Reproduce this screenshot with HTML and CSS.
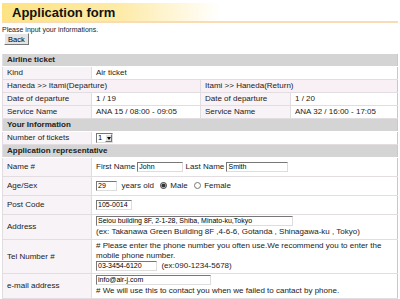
FILE: index.html
```html
<!DOCTYPE html>
<html>
<head>
  <link rel="stylesheet" href="styles.css">
</head>
<body>
  <!-- Title bar -->
  <div class="title-bar">
    <h1>Application form</h1>
  </div>
  <p class="intro">Please input your informations.</p>
  <button class="back-btn">Back</button>

  <table class="form-table">
    <colgroup>
      <col class="c-label"><col class="c-value"><col class="c-label2"><col>
    </colgroup>
    <tr><th colspan="4" class="section">Airline ticket</th></tr>
    <tr><td class="label">Kind</td><td colspan="3">Air ticket</td></tr>
    <tr class="route"><td colspan="2">Haneda &gt;&gt; Itami(Departure)</td><td colspan="2">Itami &gt;&gt; Haneda(Return)</td></tr>
    <tr><td class="label">Date of departure</td><td>1 / 19</td><td class="label">Date of departure</td><td>1 / 20</td></tr>
    <tr><td class="label">Service Name</td><td>ANA 15 / 08:00 - 09:05</td><td class="label">Service Name</td><td>ANA 32 / 16:00 - 17:05</td></tr>

    <tr><th colspan="4" class="section">Your Information</th></tr>
    <tr>
      <td class="label">Number of tickets</td>
      <td colspan="3"><span class="select-wrap"><select class="qty"><option>1</option></select></span></td>
    </tr>

    <tr><th colspan="4" class="section">Application representative</th></tr>
    <tr class="tall">
      <td class="label">Name #</td>
      <td colspan="3">First Name <input class="name" value="John"> Last Name <input class="name wide" value="Smith"></td>
    </tr>
    <tr class="tall">
      <td class="label">Age/Sex</td>
      <td colspan="3"><input class="age" value="29"> &nbsp;years old <label><input type="radio" name="sex" checked> Male</label> <label><input type="radio" name="sex"> Female</label></td>
    </tr>
    <tr class="tall">
      <td class="label">Post Code</td>
      <td colspan="3"><input class="zip" value="105-0014"></td>
    </tr>
    <tr>
      <td class="label">Address</td>
      <td colspan="3" class="multi">
        <input class="addr" value="Seiou building 8F, 2-1-28, Shiba, Minato-ku,Tokyo"><br>
        (ex: Takanawa Green Building 8F ,4-6-6, Gotanda , Shinagawa-ku , Tokyo)
      </td>
    </tr>
    <tr>
      <td class="label">Tel Number #</td>
      <td colspan="3" class="multi">
        # Please enter the phone number you often use.We recommend you to enter the mobile phone number.<br>
        <input class="tel" value="03-3454-6120"> &nbsp;(ex:090-1234-5678)
      </td>
    </tr>
    <tr>
      <td class="label">e-mail address</td>
      <td colspan="3" class="multi">
        <input class="mail" value="info@air-j.com"><br>
        # We will use this to contact you when we failed to cantact by phone.
      </td>
    </tr>
  </table>
</body>
</html>
```

FILE: styles.css
```css
body {
  margin: 0;
  padding: 2px;
  font-family: "Liberation Sans", Arial, sans-serif;
  font-size: 8px;
  color: #222;
  background: #fff;
}
.title-bar {
  height: 18px;
  margin-top: 1px;
  background: linear-gradient(to right, #fde384 0%, #fdeba8 30%, #fff 55%);
  border-bottom: 2px solid #f9dcb4;
  display: flex;
  align-items: center;
}
.title-bar h1 {
  margin: 0 0 0 10px;
  font-size: 13px;
  font-weight: bold;
  color: #111;
}
.intro {
  margin: 3px 0 0;
  font-size: 7px;
}
.back-btn {
  font: inherit;
  font-size: 7.5px;
  height: 12px;
  padding: 0 3px;
  margin-left: 2px;
  background: #e4e4e4;
  border: 1px solid;
  border-color: #fff #777 #777 #fff;
}
.form-table {
  width: 396px;
  margin-top: 9px;
  border-collapse: collapse;
  border-right: 1px solid #c8c8c8;
}
.c-label { width: 89px; }
.c-value { width: 109px; }
.c-label2 { width: 90px; }
.form-table td,
.form-table th {
  height: 12px;
  padding: 0 4px;
  border-bottom: 1px solid #e2dde0;
  border-left: 1px solid #e2dde0;
  text-align: left;
  vertical-align: middle;
  line-height: 10px;
}
.form-table .multi {
  padding-top: 1px;
  padding-bottom: 2px;
}
.form-table .section {
  background: #d4d4d4;
  font-weight: bold;
  font-size: 8px;
  border-bottom: 1px solid #fff;
}
.form-table .label {
  background: #f8f3f6;
}
.route td {
  background: #f8f0f4;
}
.tall td {
  height: 18px;
}
.form-table input {
  font: inherit;
  font-size: 7px;
  height: 10px;
  padding: 0 1px;
  margin: 0;
  border: 1px solid;
  border-color: #777 #ddd #ddd #777;
  vertical-align: middle;
  box-sizing: border-box;
}
.form-table input[type="radio"] {
  width: 7px;
  height: 7px;
  margin: 0 1px 0 4px;
  accent-color: #333;
}
.name { width: 46px; }
.name.wide { width: 62px; }
.age { width: 21px; }
.zip { width: 36px; }
.addr { width: 197px; margin-bottom: 1px !important; }
.tel { width: 61px; }
.mail { width: 115px; margin-bottom: 1px !important; }
.select-wrap {
  position: relative;
  display: inline-block;
  vertical-align: middle;
}
.qty {
  appearance: none;
  -webkit-appearance: none;
  font: inherit;
  font-size: 7.5px;
  height: 10px;
  width: 17px;
  padding: 0 0 0 1px;
  margin: 0;
  border: 1px solid;
  border-color: #777 #ddd #ddd #777;
  border-radius: 0;
  background: #fff;
  display: block;
  line-height: 8px;
}
/* dropdown arrow box drawn over the select */
.select-wrap::after {
  content: "";
  position: absolute;
  right: 1px;
  top: 1px;
  width: 7px;
  height: 8px;
  box-sizing: border-box;
  background: #e0e0e0;
  border: 1px solid;
  border-color: #fff #777 #777 #fff;
}
.select-wrap::before {
  content: "";
  position: absolute;
  right: 2px;
  top: 4px;
  z-index: 1;
  border-left: 2.5px solid transparent;
  border-right: 2.5px solid transparent;
  border-top: 3px solid #000;
}
```
